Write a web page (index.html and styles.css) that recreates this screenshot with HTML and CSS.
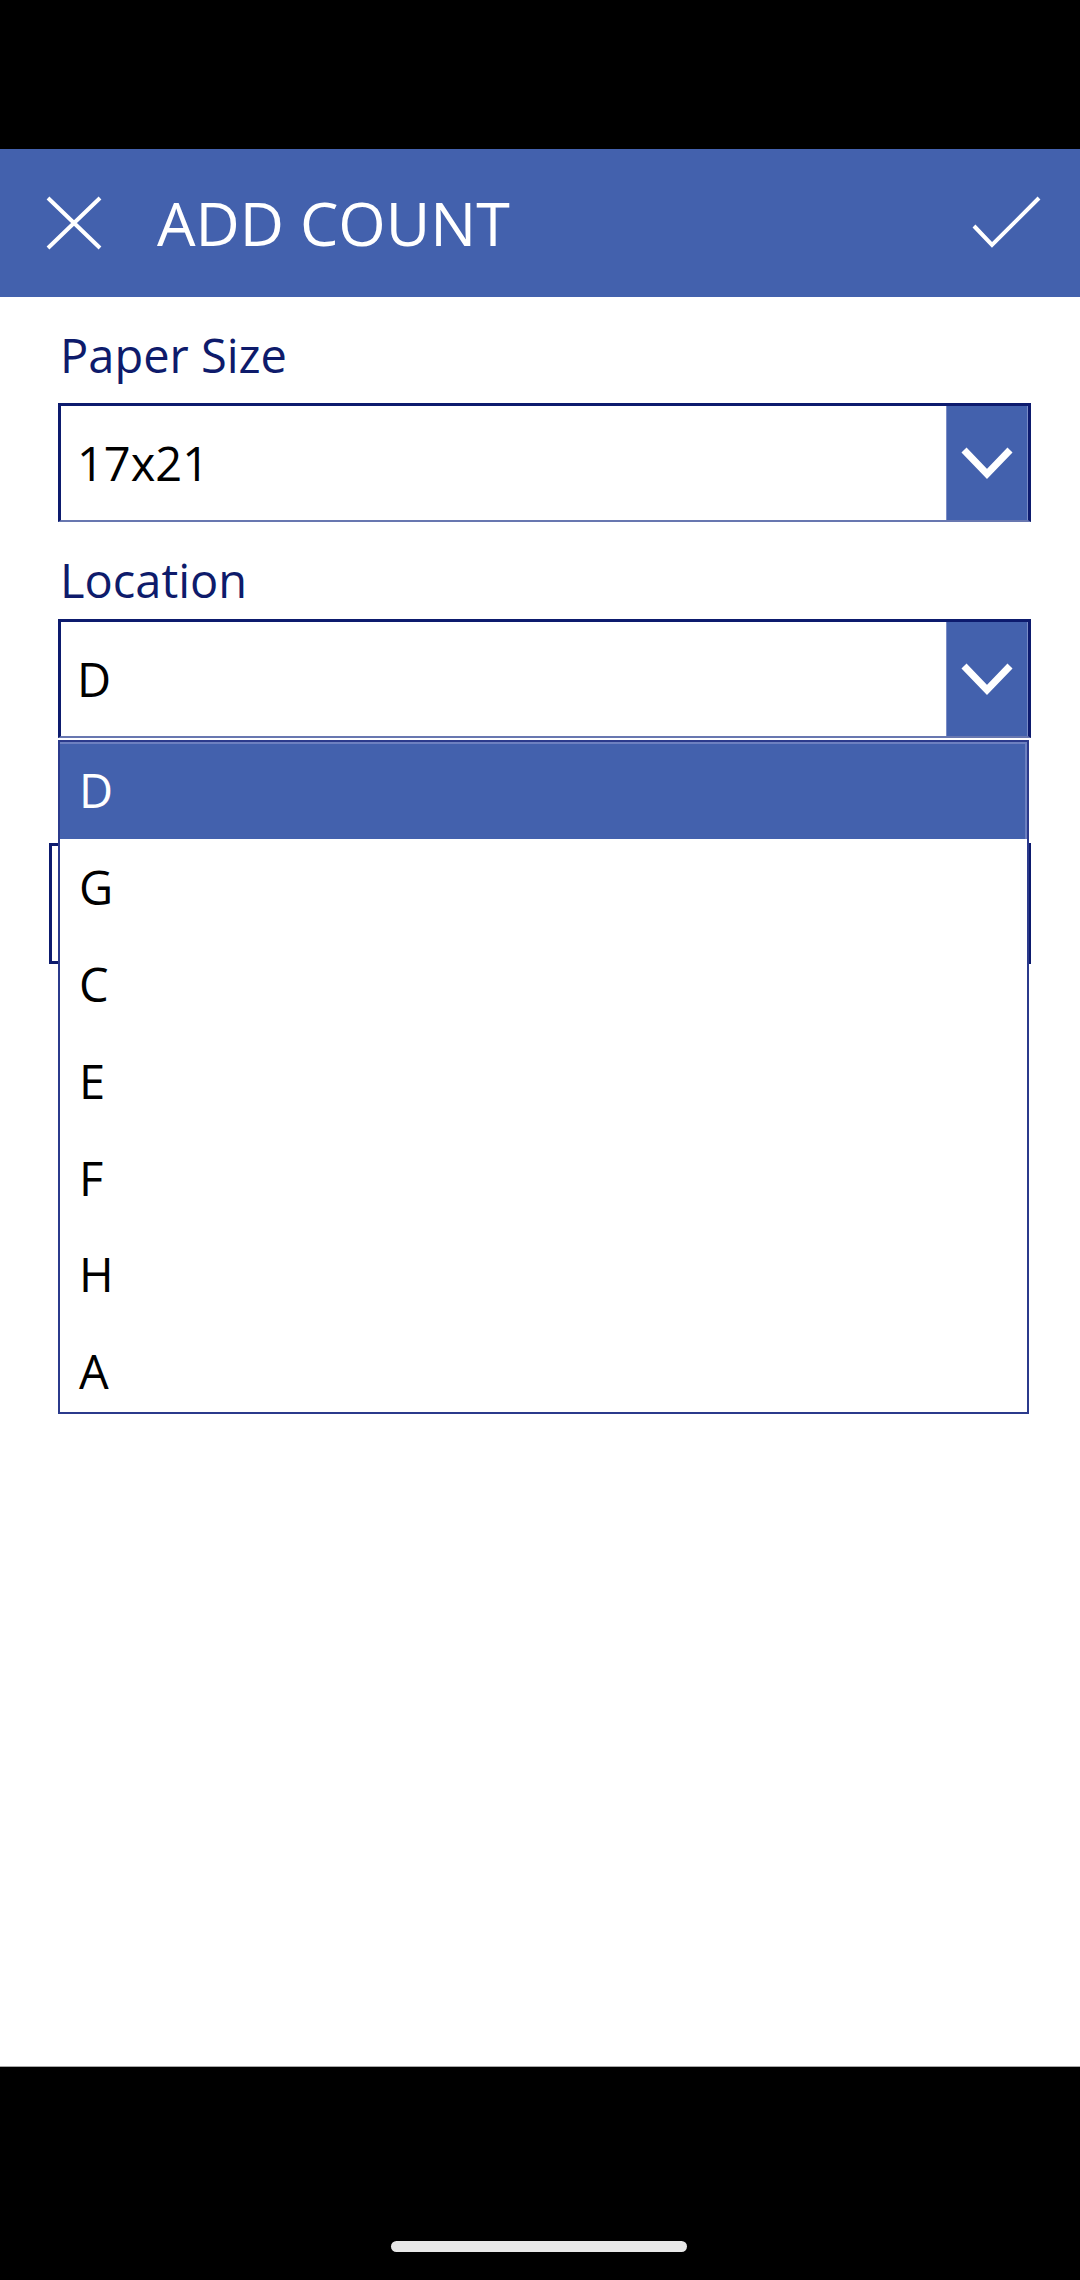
FILE: index.html
```html
<!DOCTYPE html>
<html lang="en">
<head>
<meta charset="utf-8">
<title>Add Count</title>
<link rel="stylesheet" href="styles.css">
</head>
<body>
<div class="screen">
  <div class="status-bar"></div>
  <header class="app-header">
    <svg class="icon-close" width="56" height="54" viewBox="0 0 56 54">
      <path d="M2 2 L54 52 M54 2 L2 52" stroke="#fff" stroke-width="4" fill="none"/>
    </svg>
    <h1 class="title">ADD COUNT</h1>
    <svg class="icon-check" width="70" height="54" viewBox="0 0 70 54">
      <path d="M2 30 L20 49 L67 2" stroke="#fff" stroke-width="4" fill="none"/>
    </svg>
  </header>
  <main class="form">
    <label class="field-label label-paper">Paper Size</label>
    <div class="dropdown">
      <span class="dropdown-value">17x21</span>
      <span class="dropdown-btn">
        <svg width="54" height="34" viewBox="0 0 54 34"><path d="M4 4 L27 28 L50 4" stroke="#fff" stroke-width="7" fill="none"/></svg>
      </span>
    </div>
    <label class="field-label label-location">Location</label>
    <div class="dropdown-wrap">
      <div class="dropdown">
        <span class="dropdown-value">D</span>
        <span class="dropdown-btn">
          <svg width="54" height="34" viewBox="0 0 54 34"><path d="M4 4 L27 28 L50 4" stroke="#fff" stroke-width="7" fill="none"/></svg>
        </span>
      </div>
      <ul class="options">
        <li class="option selected">D</li>
        <li class="option">G</li>
        <li class="option">C</li>
        <li class="option">E</li>
        <li class="option">F</li>
        <li class="option">H</li>
        <li class="option">A</li>
      </ul>
    </div>
    <div class="count-input"></div>
  </main>
  <div class="nav-bar"><span class="home-pill"></span></div>
</div>
</body>
</html>
```

FILE: styles.css
```css
html, body {
  margin: 0;
  padding: 0;
  background: #fff;
}
.screen {
  width: 1080px;
  height: 2280px;
  display: flex;
  flex-direction: column;
  font-family: "Open Sans", "Noto Sans", sans-serif;
  overflow: hidden;
}
.status-bar {
  height: 149px;
  background: #000;
  flex: none;
}
.app-header {
  height: 148px;
  flex: none;
  background: #4361ad;
  display: flex;
  align-items: center;
  padding-left: 46px;
  padding-right: 38px;
}
.icon-close {
  flex: none;
  display: block;
}
.title {
  margin: 0 0 0 55px;
  font-weight: 400;
  font-size: 61px;
  color: #fff;
  flex: 1;
  line-height: 1.362;
  letter-spacing: 0;
}
.icon-check {
  flex: none;
  display: block;
}
.form {
  flex: 1;
  display: flex;
  flex-direction: column;
  padding: 26px 49px 0 58px;
}
.field-label {
  display: block;
  font-size: 47px;
  line-height: 64px;
  color: #0e1b6b;
  padding-left: 2px;
}
.label-paper {
  margin-bottom: 16px;
}
.label-location {
  margin-top: 26px;
  margin-bottom: 7px;
}
.dropdown {
  height: 119px;
  box-sizing: border-box;
  border: 3px solid #0d1b6e;
  border-bottom: 2px solid #6877b0;
  display: flex;
  align-items: center;
  background: #fff;
}
.dropdown-value {
  flex: 1;
  font-size: 47px;
  line-height: 64px;
  color: #000;
  padding-left: 16px;
}
.dropdown-btn {
  width: 82px;
  align-self: stretch;
  background: #4361ad;
  display: flex;
  align-items: center;
  justify-content: center;
  box-shadow: inset 1px 0 0 #7a8cc6, inset -1px 0 0 #7a8cc6;
}
.dropdown-btn svg {
  display: block;
}
.dropdown-wrap {
  position: relative;
}
.options {
  position: absolute;
  top: 121px;
  left: 0;
  width: 971px;
  height: 674px;
  overflow: hidden;
  box-sizing: border-box;
  margin: 0;
  padding: 0;
  list-style: none;
  background: #fff;
  border: 2px solid #2b3a8c;
  z-index: 2;
}
.option {
  height: 96.8px;
  display: flex;
  align-items: center;
  padding-left: 19px;
  font-size: 47px;
  line-height: 64px;
  color: #000;
}
.option.selected {
  background: #4361ad;
  color: #fff;
  box-shadow: inset -2px 0 0 #6d80c0, inset 0 2px 0 #6d80c0;
}
.count-input {
  margin-top: 105px;
  margin-left: -9px;
  height: 121px;
  box-sizing: border-box;
  border: 3px solid #0d1b6e;
}
.nav-bar {
  height: 213px;
  flex: none;
  background: #000;
  border-top: 1px solid #a8a8a8;
  position: relative;
}
.home-pill {
  position: absolute;
  left: 391px;
  top: 174px;
  width: 296px;
  height: 11px;
  border-radius: 6px;
  background: #e8e8e8;
}
```
